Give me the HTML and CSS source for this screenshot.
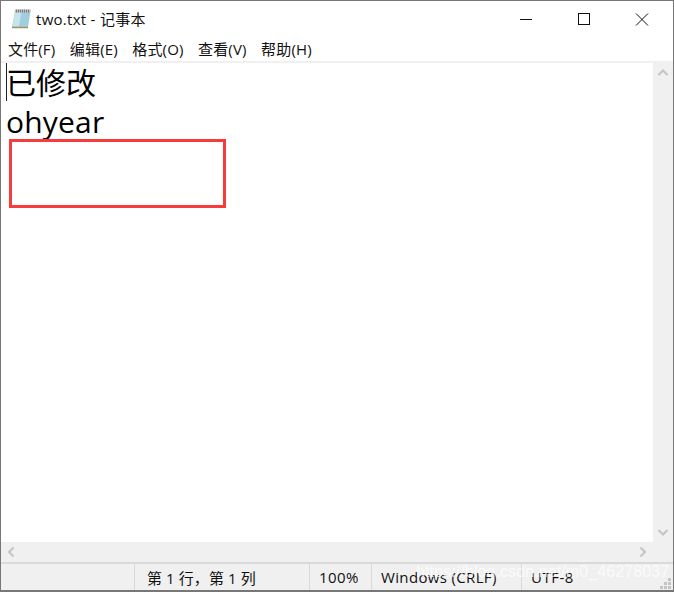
FILE: index.html
```html
<!DOCTYPE html>
<html lang="zh-CN">
<head>
<meta charset="utf-8">
<title>two.txt - 记事本</title>
<link rel="stylesheet" href="styles.css">
</head>
<body>
<div class="window">
  <header class="titlebar">
    <svg class="app-icon" width="20" height="20" viewBox="0 0 20 20">
      <path d="M4 2.5 H19.5 L17 18 H1 Z" fill="#9fcfdd"/>
      <path d="M4 3 L1.5 17.5 H8 L10.5 3 Z" fill="#c5e4ec"/>
      <path d="M4 .5 H19.8 L19.4 3.5 H3.6 Z" fill="#bcbcbc"/>
      <path d="M5.5 .5v3M7.5 .5v3M9.5 .5v3M11.5 .5v3M13.5 .5v3M15.5 .5v3M17.5 .5v3" stroke="#6f6f6f" stroke-width=".8"/>
      <path d="M1 18.5 H17" stroke="#a8915a" stroke-width="1.5"/>
    </svg>
    <span class="title">two.txt - 记事本</span>
    <div class="controls">
      <svg class="ctl" width="58" height="36" viewBox="0 0 58 36"><path d="M23 18.5h12" stroke="#111" stroke-width="1"/></svg>
      <svg class="ctl" width="58" height="36" viewBox="0 0 58 36"><rect x="23.5" y="12.5" width="11" height="11" fill="none" stroke="#111" stroke-width="1"/></svg>
      <svg class="ctl" width="58" height="36" viewBox="0 0 58 36"><path d="M23 12.5l12 12M35 12.5l-12 12" stroke="#111" stroke-width="1"/></svg>
    </div>
  </header>
  <nav class="menubar">
    <span class="menu">文件(F)</span>
    <span class="menu">编辑(E)</span>
    <span class="menu">格式(O)</span>
    <span class="menu">查看(V)</span>
    <span class="menu">帮助(H)</span>
  </nav>
  <div class="client">
    <div class="editor-row">
      <main class="editor">
        <span class="caret"></span>
        <div class="line">已修改</div>
        <div class="line line-latin">ohyear</div>
        <div class="redact"></div>
      </main>
      <div class="vscroll">
        <svg width="20" height="20" viewBox="0 0 20 20"><path d="M5.5 12 L10 7.5 L14.5 12" fill="none" stroke="#c4c4c4" stroke-width="2"/></svg>
        <svg width="20" height="20" viewBox="0 0 20 20"><path d="M5.5 8 L10 12.5 L14.5 8" fill="none" stroke="#c4c4c4" stroke-width="2"/></svg>
      </div>
    </div>
    <div class="hscroll">
      <svg width="20" height="20" viewBox="0 0 20 20"><path d="M12.5 5.5 L8 10 L12.5 14.5" fill="none" stroke="#c4c4c4" stroke-width="2"/></svg>
      <svg width="20" height="20" viewBox="0 0 20 20"><path d="M7.5 5.5 L12 10 L7.5 14.5" fill="none" stroke="#c4c4c4" stroke-width="2"/></svg>
    </div>
  </div>
  <footer class="statusbar">
    <div class="cell cell-fill"></div>
    <div class="cell cell-pos">第 1 行，第 1 列</div>
    <div class="cell cell-zoom">100%</div>
    <div class="cell cell-eol">Windows (CRLF)</div>
    <div class="cell cell-enc">UTF-8</div>
    <svg class="grip" width="12" height="12" viewBox="0 0 12 12"><path d="M8 0h3v3H8zM4 4h3v3H4zM8 4h3v3H8zM0 8h3v3H0zM4 8h3v3H4zM8 8h3v3H8z" fill="#c4c4c4"/></svg>
  </footer>
  <div class="watermark">https://blog.csdn.net/m0_46278037</div>
</div>
</body>
</html>
```

FILE: styles.css
```css
* { box-sizing: border-box; }
html, body { margin: 0; height: 100%; background: #fff; }
body { width: 674px; height: 592px; overflow: hidden; font-family: "Noto Sans CJK SC", "Open Sans", sans-serif; color: #000; }
.window {
  position: relative;
  width: 674px;
  height: 592px;
  display: flex;
  flex-direction: column;
  border: 1px solid #777;
  border-width: 1px 1px 2px 1px;
  background: #fff;
  overflow: hidden;
}
.titlebar { height: 36px; display: flex; align-items: center; padding-left: 10px; flex: none; }
.app-icon { flex: none; margin-top: -1px; }
.title { margin-left: 5px; font-size: 15px; letter-spacing: .28px; line-height: 20px; font-family: "Open Sans", "Noto Sans CJK SC", sans-serif; color: #111; margin-top: -1px; }
.controls { margin-left: auto; display: flex; margin-right: 2px; }
.ctl { display: block; }
.menubar { height: 26px; display: flex; align-items: center; padding-left: 7px; gap: 14.5px; flex: none; border-bottom: 2px solid #f0f0f0; font-size: 15px; letter-spacing: .15px; font-family: "Open Sans", "Noto Sans CJK SC", sans-serif; color: #111; }
.menu { line-height: 20px; white-space: nowrap; }
.client { flex: 1; display: flex; flex-direction: column; min-height: 0; }
.editor-row { flex: 1; display: flex; min-height: 0; }
.editor { position: relative; flex: 1; padding-left: 5px; font-family: "Open Sans", "Noto Sans CJK SC", sans-serif; font-size: 30px; }
.line { height: 39px; line-height: 39px; white-space: nowrap; }
.line-latin { letter-spacing: .2px; }
.caret { position: absolute; left: 5px; top: 0; width: 1px; height: 38px; background: #222; }
.redact { position: absolute; left: 8px; top: 76px; width: 217px; height: 69px; border: 3px solid #f83c3c; background: #fff; }
.vscroll { width: 20px; flex: none; background: #f0f0f0; display: flex; flex-direction: column; justify-content: space-between; }
.vscroll svg, .hscroll svg { display: block; }
.hscroll { height: 20px; flex: none; background: #f0f0f0; display: flex; justify-content: space-between; padding-right: 20px; }
.statusbar { height: 28px; flex: none; display: flex; align-items: stretch; background: #f0f0f0; border-top: 2px solid #d9d9d9; font-size: 15px; letter-spacing: .1px; color: #111; font-family: "Open Sans", "Noto Sans CJK SC", sans-serif; position: relative; }
.cell { display: flex; align-items: center; border-left: 1px solid #d9d9d9; padding-left: 12px; white-space: nowrap; }
.cell-fill { width: 133px; border-left: 0; padding: 0; }
.cell-pos { width: 175px; }
.cell-zoom { width: 62px; padding-left: 9px; letter-spacing: .4px; }
.cell-eol { width: 150px; padding-left: 9px; letter-spacing: .35px; }
.cell-enc { flex: 1; padding-left: 9px; letter-spacing: .5px; }
.grip { position: absolute; right: 1px; bottom: 0; }
.watermark { position: absolute; left: 415px; top: 561px; font-family: "Liberation Sans", sans-serif; font-size: 16px; line-height: 20px; letter-spacing: .1px; color: rgba(255,255,255,.72); white-space: nowrap; }
```
